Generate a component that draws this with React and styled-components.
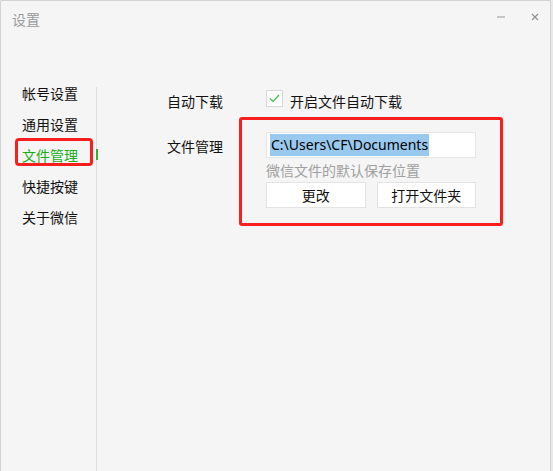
import React from 'react';
import styled, { createGlobalStyle } from 'styled-components';

const GlobalStyle = createGlobalStyle`
  html, body {
    margin: 0;
    padding: 0;
    background: #e9e9e9;
  }
  body {
    font-family: "Noto Sans CJK SC", "Noto Sans", sans-serif;
    overflow: hidden;
  }
`;

const Window = styled.div`
  width: 551px;
  height: 472px;
  box-sizing: border-box;
  background: #f5f5f5;
  border: 1px solid #d3d3d3;
  border-bottom: none;
  border-radius: 2px 2px 0 0;
  display: flex;
  flex-direction: column;
`;

const TitleBar = styled.div`
  height: 35px;
  display: flex;
  align-items: center;
  padding: 0 11px 0 11px;
`;

const Title = styled.div`
  font-size: 14px;
  color: #9a9a9a;
  flex: 1;
`;

const Controls = styled.div`
  display: flex;
  align-items: center;
  gap: 26px;
  margin-top: -4px;
`;

const MinBtn = styled.div`
  width: 8px;
  height: 2px;
  background: #c6c6c6;
`;

const Body = styled.div`
  flex: 1;
  display: flex;
  margin-top: 42px;
`;

const Sidebar = styled.div`
  width: 95px;
  display: flex;
  flex-direction: column;
`;

const NavItem = styled.div`
  position: relative;
  height: 31px;
  line-height: 31px;
  padding-left: 21px;
  font-size: 14px;
  color: ${p => (p.$active ? '#1aad19' : '#111')};

  ${p =>
    p.$active &&
    `
    &::before {
      content: '';
      position: absolute;
      left: 14px;
      top: -2px;
      width: 78px;
      height: 28px;
      box-sizing: border-box;
      border: 3px solid #fa1e1e;
      border-radius: 4px;
    }
    &::after {
      content: '';
      position: absolute;
      right: -2px;
      top: 9px;
      width: 2px;
      height: 11px;
      background: #2db52d;
    }
  `}
`;

const Divider = styled.div`
  width: 1px;
  margin-top: 9px;
  background: #dedede;
`;

const Content = styled.div`
  flex: 1;
  padding: 12px 0 0 70px;
  display: grid;
  grid-template-columns: 99px 210px;
  grid-auto-rows: min-content;
  row-gap: 20px;
  align-content: start;
`;

const Label = styled.div`
  font-size: 14px;
  color: #111;
  line-height: ${p => p.$h || 22}px;
  padding-top: ${p => p.$pt || 0}px;
`;

const CheckRow = styled.label`
  display: flex;
  align-items: flex-start;
  gap: 7px;
  font-size: 14px;
  color: #111;
  line-height: 22px;
  white-space: nowrap;
`;

const Box = styled.span`
  width: 17px;
  height: 17px;
  box-sizing: border-box;
  background: #fff;
  border: 1px solid #d9d9d9;
  display: flex;
  align-items: center;
  justify-content: center;
`;

const Group = styled.div`
  position: relative;
  width: 210px;
  display: flex;
  flex-direction: column;

  &::before {
    content: '';
    position: absolute;
    top: -15px;
    left: -27px;
    right: -27px;
    bottom: -18px;
    border: 3px solid #fa1e1e;
    border-radius: 3px;
    pointer-events: none;
  }
`;

const PathInput = styled.div`
  height: 26px;
  box-sizing: border-box;
  background: #fff;
  border: 1px solid #e6e6e6;
  padding: 1px 0 1px 3px;
  display: flex;
`;

const Selected = styled.span`
  background: #99c9ef;
  color: #000;
  font-family: "Noto Sans", "Noto Sans CJK SC", sans-serif;
  font-size: 14px;
  line-height: 22px;
  padding: 0 1px;
`;

const Hint = styled.div`
  font-size: 14px;
  color: #a0a0a0;
  line-height: 24px;
`;

const Buttons = styled.div`
  display: flex;
  gap: 11px;
`;

const Button = styled.button`
  flex: 1;
  height: 26px;
  background: #fff;
  border: 1px solid #e3e3e3;
  font-family: "Noto Sans CJK SC", sans-serif;
  font-size: 14px;
  color: #111;
  padding: 0;
`;

const navItems = ['帐号设置', '通用设置', '文件管理', '快捷按键', '关于微信'];

export default function App() {
  return (
    <>
      <GlobalStyle />
      <Window>
        <TitleBar>
          <Title>设置</Title>
          <Controls>
            <MinBtn />
            <svg width="8" height="8" viewBox="0 0 8 8">
              <path d="M1 1L7 7M7 1L1 7" stroke="#8e8e8e" strokeWidth="1.1" />
            </svg>
          </Controls>
        </TitleBar>
        <Body>
          <Sidebar>
            {navItems.map(item => (
              <NavItem key={item} $active={item === '文件管理'}>
                {item}
              </NavItem>
            ))}
          </Sidebar>
          <Divider />
          <Content>
            <Label>自动下载</Label>
            <CheckRow>
              <Box>
                <svg width="11" height="9" viewBox="0 0 11 9">
                  <path d="M1 4.5L4 7.5L10 1" fill="none" stroke="#3fb94c" strokeWidth="1.2" />
                </svg>
              </Box>
              开启文件自动下载
            </CheckRow>
            <Label $h={26} $pt={1}>文件管理</Label>
            <Group>
              <PathInput>
                <Selected>C:\Users\CF\Documents</Selected>
              </PathInput>
              <Hint>微信文件的默认保存位置</Hint>
              <Buttons>
                <Button>更改</Button>
                <Button>打开文件夹</Button>
              </Buttons>
            </Group>
          </Content>
        </Body>
      </Window>
    </>
  );
}
